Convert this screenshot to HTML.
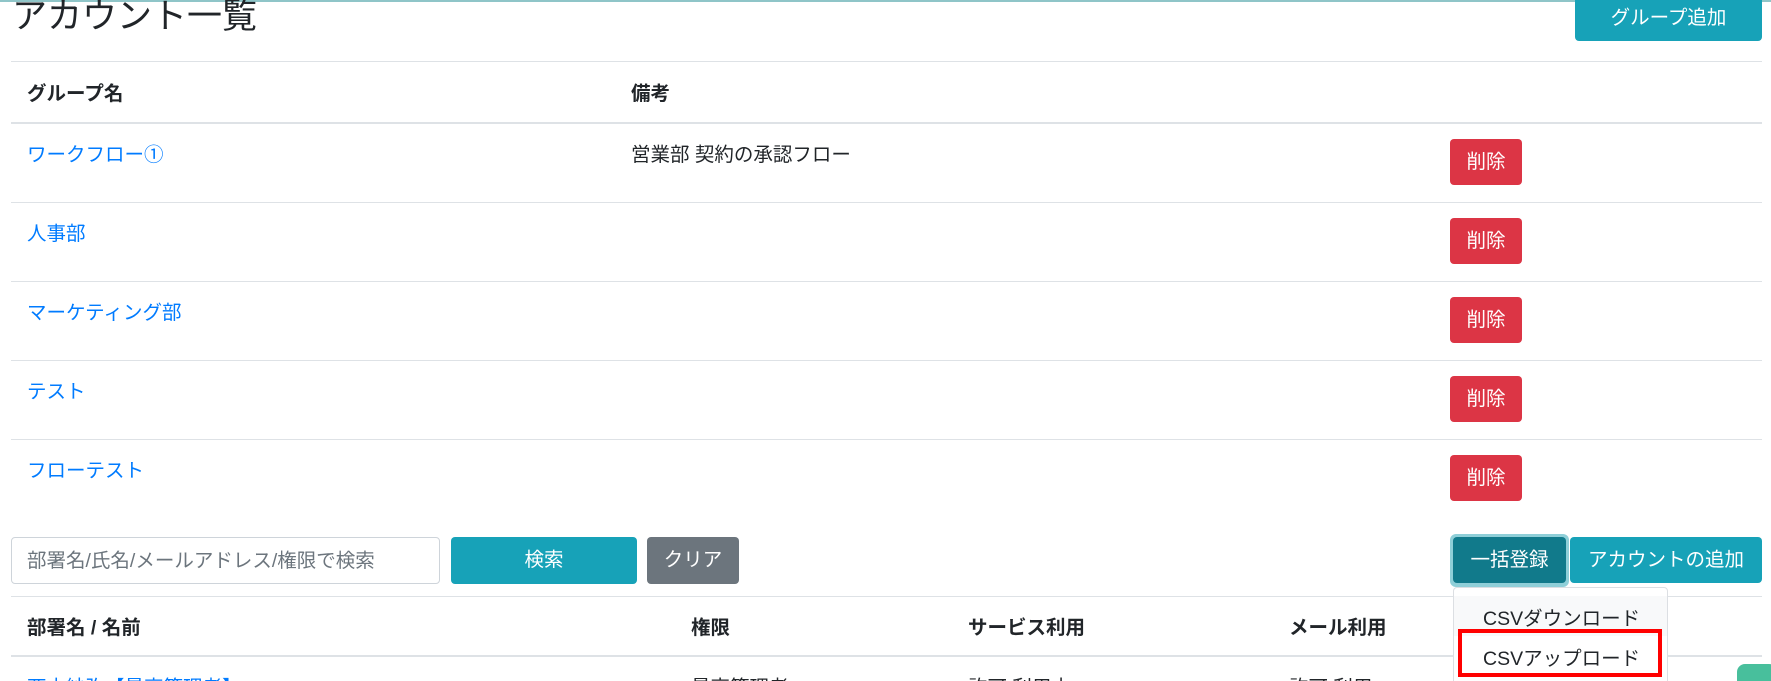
<!DOCTYPE html>
<html style="width:1771px;height:681px;overflow:hidden"><head><meta charset="utf-8"><style>
*{margin:0;padding:0;box-sizing:border-box}
body{width:1771px;height:681px;overflow:hidden;background:#fff;position:relative;font-family:"Liberation Sans","Noto Sans CJK JP",sans-serif;color:#212529}
.a{position:absolute;white-space:nowrap}
.ln{position:absolute;left:11px;width:1751px;height:1px;background:#dee2e6}
.t{font-size:19.5px;line-height:24px}
.b{font-weight:bold}
.lk{color:#007bff}
.del{position:absolute;left:1450px;width:72px;height:46px;background:#dc3545;border-radius:4px;color:#fff;font-size:19.5px;text-align:center;line-height:46px}
.btn{position:absolute;border-radius:4px;color:#fff;font-size:19.5px;text-align:center}
</style></head><body>
<div class="a" style="left:0;top:0;width:1771px;height:2px;background:#8fc5c8"></div>
<div class="a" style="left:12px;top:-5px;font-size:35px;line-height:44px">アカウント一覧</div>
<div class="btn" style="left:1575px;top:-4px;width:187px;height:45px;line-height:45px;background:#17a2b8">グループ追加</div>

<div class="ln" style="top:61px"></div>
<div class="a t b" style="left:27px;top:82px">グループ名</div>
<div class="a t b" style="left:631px;top:82px">備考</div>
<div class="ln" style="top:122px;height:2px"></div>

<div class="a t lk" style="left:27px;top:143px">ワークフロー①</div>
<div class="a t" style="left:631px;top:143px">営業部 契約の承認フロー</div>
<div class="del" style="top:139px">削除</div>
<div class="ln" style="top:202px"></div>

<div class="a t lk" style="left:27px;top:222px">人事部</div>
<div class="del" style="top:218px">削除</div>
<div class="ln" style="top:281px"></div>

<div class="a t lk" style="left:27px;top:301px">マーケティング部</div>
<div class="del" style="top:297px">削除</div>
<div class="ln" style="top:360px"></div>

<div class="a t lk" style="left:27px;top:380px">テスト</div>
<div class="del" style="top:376px">削除</div>
<div class="ln" style="top:439px"></div>

<div class="a t lk" style="left:27px;top:459px">フローテスト</div>
<div class="del" style="top:455px">削除</div>

<div class="a" style="left:11px;top:537px;width:429px;height:47px;border:1px solid #ced4da;border-radius:4px"></div>
<div class="a t" style="left:27px;top:549px;color:#6c757d">部署名/氏名/メールアドレス/権限で検索</div>
<div class="btn" style="left:451px;top:537px;width:186px;height:47px;line-height:47px;background:#17a2b8">検索</div>
<div class="btn" style="left:647px;top:537px;width:92px;height:47px;line-height:47px;background:#6c757d">クリア</div>

<div class="a" style="left:1450px;top:534px;width:119px;height:53px;border-radius:6px;background:#8fcfd8"></div>
<div class="btn" style="left:1453px;top:537px;width:113px;height:46px;line-height:46px;background:#117a8b">一括登録</div>
<div class="btn" style="left:1570px;top:537px;width:192px;height:46px;line-height:46px;background:#17a2b8">アカウントの追加</div>

<div class="ln" style="top:596px;width:1442px"></div>
<div class="a t b" style="left:27px;top:616px">部署名 / 名前</div>
<div class="a t b" style="left:691px;top:616px">権限</div>
<div class="a t b" style="left:968px;top:616px">サービス利用</div>
<div class="a t b" style="left:1289px;top:616px">メール利用</div>
<div class="ln" style="top:655px;height:2px"></div>
<div class="ln" style="top:596px;left:1668px;width:94px"></div>

<div class="a t lk" style="left:27px;top:676px">西本紗弥【最高管理者】</div>
<div class="a t" style="left:691px;top:676px">最高管理者</div>
<div class="a t" style="left:968px;top:676px">許可 利用中</div>
<div class="a t" style="left:1289px;top:676px">許可 利用</div>

<div class="a" style="left:1453px;top:587px;width:215px;height:100px;background:#fff;border:1px solid #dcdfe3;border-radius:4px"></div>
<div class="a" style="left:1454px;top:596px;width:213px;height:40px;background:#f8f9fa"></div>
<div class="a t" style="left:1483px;top:607px;color:#212529">CSVダウンロード</div>
<div class="a" style="left:1458px;top:629px;width:204px;height:48px;border:4px solid #ff0000"></div>
<div class="a t" style="left:1483px;top:647px;color:#212529">CSVアップロード</div>

<div class="a" style="left:1737px;top:664px;width:40px;height:30px;background:#48bf9c;border-radius:8px"></div>
</body></html>
